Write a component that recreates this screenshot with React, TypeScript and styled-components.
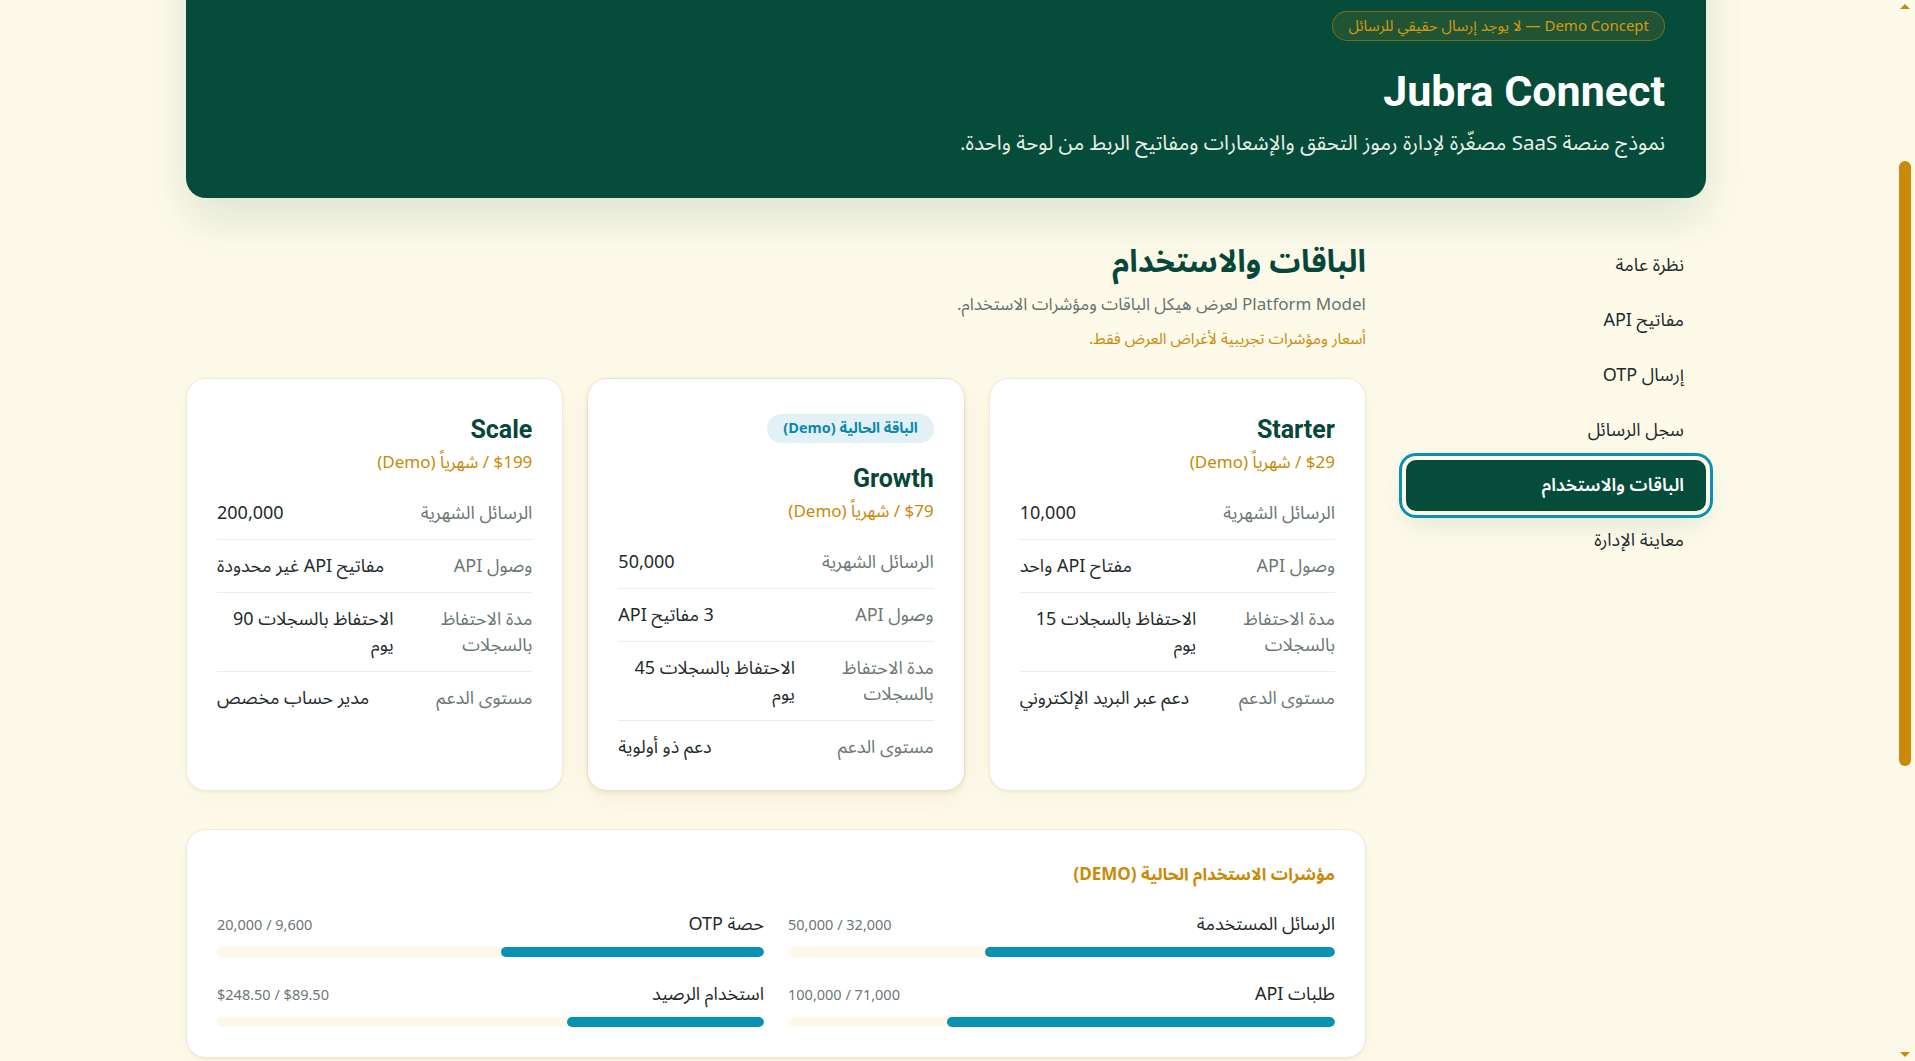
import React, { useLayoutEffect, useState } from "react";
import styled, { createGlobalStyle } from "styled-components";

const GlobalStyle = createGlobalStyle`
  * { box-sizing: border-box; }
  html {
    background: #fdfaea;
    scrollbar-color: #c98a07 #fdfaea;
  }
  body {
    margin: 0;
    background: #fdfaea;
    color: #1e2b29;
    font-family: "Noto Sans Arabic", "Noto Sans", "DejaVu Sans", sans-serif;
  }
`;

const NAV_ITEMS = [
  "نظرة عامة",
  "مفاتيح API",
  "إرسال OTP",
  "سجل الرسائل",
  "الباقات والاستخدام",
  "معاينة الإدارة",
];
const ACTIVE_NAV = "الباقات والاستخدام";

const PLANS = [
  {
    name: "Starter",
    price: "$29 / شهرياً (Demo)",
    current: false,
    specs: [
      ["الرسائل الشهرية", "10,000"],
      ["وصول API", "مفتاح API واحد"],
      ["مدة الاحتفاظ بالسجلات", "الاحتفاظ بالسجلات 15 يوم"],
      ["مستوى الدعم", "دعم عبر البريد الإلكتروني"],
    ],
  },
  {
    name: "Growth",
    price: "$79 / شهرياً (Demo)",
    current: true,
    specs: [
      ["الرسائل الشهرية", "50,000"],
      ["وصول API", "3 مفاتيح API"],
      ["مدة الاحتفاظ بالسجلات", "الاحتفاظ بالسجلات 45 يوم"],
      ["مستوى الدعم", "دعم ذو أولوية"],
    ],
  },
  {
    name: "Scale",
    price: "$199 / شهرياً (Demo)",
    current: false,
    specs: [
      ["الرسائل الشهرية", "200,000"],
      ["وصول API", "مفاتيح API غير محدودة"],
      ["مدة الاحتفاظ بالسجلات", "الاحتفاظ بالسجلات 90 يوم"],
      ["مستوى الدعم", "مدير حساب مخصص"],
    ],
  },
];

const METERS = [
  { label: "الرسائل المستخدمة", used: 32000, total: 50000, money: false },
  { label: "حصة OTP", used: 9600, total: 20000, money: false },
  { label: "طلبات API", used: 71000, total: 100000, money: false },
  { label: "استخدام الرصيد", used: 89.5, total: 248.5, money: true },
];

const fmt = (n: number, money: boolean) =>
  money ? `$${n.toFixed(2)}` : n.toLocaleString("en-US");

const ARROW_SIZE = 15;

// headless browser hides native scrollbars, so draw the themed one
const ScrollIndicator = () => {
  const [thumb, setThumb] = useState({ top: 0, height: 0 });

  useLayoutEffect(() => {
    const update = () => {
      const docH = document.documentElement.scrollHeight;
      const viewH = window.innerHeight;
      const track = viewH - ARROW_SIZE * 2;
      setThumb({
        top: ARROW_SIZE + (track * window.scrollY) / docH,
        height: (track * viewH) / docH,
      });
    };
    update();
    window.addEventListener("scroll", update);
    return () => window.removeEventListener("scroll", update);
  }, []);

  return (
    <Rail>
      <ArrowUp />
      <Thumb style={{ top: thumb.top, height: thumb.height }} />
      <ArrowDown />
    </Rail>
  );
};

export default function App() {
  // the page is shown scrolled past the top of the hero
  useLayoutEffect(() => {
    window.scrollTo(0, 256);
  }, []);

  return (
    <>
      <GlobalStyle />
      <Page dir="rtl">
        <Container>
          <Hero>
            <DemoPill>Demo Concept — لا يوجد إرسال حقيقي للرسائل</DemoPill>
            <HeroTitle>Jubra Connect</HeroTitle>
            <HeroText>
              نموذج منصة SaaS مصغّرة لإدارة رموز التحقق والإشعارات ومفاتيح الربط
              من لوحة واحدة.
            </HeroText>
          </Hero>

          <Layout>
            <Sidebar>
              {NAV_ITEMS.map((item) => (
                <NavItem key={item} $active={item === ACTIVE_NAV}>
                  {item}
                </NavItem>
              ))}
            </Sidebar>

            <Main>
              <SectionTitle>الباقات والاستخدام</SectionTitle>
              <SectionLead>
                Platform Model لعرض هيكل الباقات ومؤشرات الاستخدام.
              </SectionLead>
              <SectionNote>أسعار ومؤشرات تجريبية لأغراض العرض فقط.</SectionNote>

              <PlanGrid>
                {PLANS.map((plan) => (
                  <PlanCard key={plan.name} $current={plan.current}>
                    {plan.current && (
                      <CurrentBadge>الباقة الحالية (Demo)</CurrentBadge>
                    )}
                    <PlanName>{plan.name}</PlanName>
                    <PlanPrice>{plan.price}</PlanPrice>
                    <SpecList>
                      {plan.specs.map(([label, value]) => (
                        <SpecRow key={label}>
                          <SpecLabel>{label}</SpecLabel>
                          <SpecValue>{value}</SpecValue>
                        </SpecRow>
                      ))}
                    </SpecList>
                  </PlanCard>
                ))}
              </PlanGrid>

              <UsageCard>
                <UsageTitle>مؤشرات الاستخدام الحالية (DEMO)</UsageTitle>
                <MeterGrid>
                  {METERS.map((m) => (
                    <Meter key={m.label}>
                      <MeterHead>
                        <MeterLabel>{m.label}</MeterLabel>
                        <MeterValue>
                          {fmt(m.used, m.money)} / {fmt(m.total, m.money)}
                        </MeterValue>
                      </MeterHead>
                      <Track>
                        <Fill style={{ width: `${(m.used / m.total) * 100}%` }} />
                      </Track>
                    </Meter>
                  ))}
                </MeterGrid>
              </UsageCard>
            </Main>
          </Layout>
        </Container>
      </Page>
      <ScrollIndicator />
    </>
  );
}

const Page = styled.div`
  min-height: 1808px;
  padding: 24px 23px 40px 0;
`;

const Container = styled.div`
  max-width: 1520px;
  margin: 0 auto;
`;

const Hero = styled.header`
  min-height: 430px;
  display: flex;
  flex-direction: column;
  justify-content: flex-end;
  align-items: flex-start;
  padding: 40px 41px 39px;
  background: #054c3b;
  border-radius: 20px;
  box-shadow: 0 22px 48px rgba(5, 76, 59, 0.12);
  color: #fff;
`;

const DemoPill = styled.span`
  display: inline-block;
  padding: 4px 15px;
  border-radius: 999px;
  border: 1px solid rgba(201, 138, 7, 0.5);
  background: rgba(201, 138, 7, 0.14);
  color: #d49a14;
  font-size: 15px;
  line-height: 20px;
`;

const HeroTitle = styled.h1`
  margin: 21px 0 0;
  font-family: Roboto, "Noto Sans", sans-serif;
  font-size: 43px;
  line-height: 58px;
  font-weight: 700;
  color: #fff;
`;

const HeroText = styled.p`
  margin: 9px 0 0;
  font-size: 20.5px;
  line-height: 30px;
  color: #e9efe6;
`;

const Layout = styled.div`
  display: grid;
  grid-template-columns: 300px 1fr;
  gap: 40px;
  align-items: start;
  margin-top: 42px;
`;

const Sidebar = styled.nav`
  display: flex;
  flex-direction: column;
  gap: 4px;
`;

const NavItem = styled.a<{ $active?: boolean }>`
  display: block;
  padding: 12px 22px;
  border-radius: 10px;
  font-size: 18px;
  line-height: 27px;
  font-weight: ${({ $active }) => ($active ? 600 : 400)};
  color: ${({ $active }) => ($active ? "#ffffff" : "#1e2b29")};
  background: ${({ $active }) => ($active ? "#054c3b" : "transparent")};
  box-shadow: ${({ $active }) =>
    $active
      ? "0 0 0 4px #fdfaea, 0 0 0 7px #0b8fb3, 0 12px 28px rgba(5, 76, 59, 0.12)"
      : "none"};
  cursor: pointer;
`;

const Main = styled.main`
  min-width: 0;
`;

const SectionTitle = styled.h2`
  margin: -3px 0 0;
  font-size: 31px;
  line-height: 50px;
  font-weight: 700;
  color: #06473a;
`;

const SectionLead = styled.p`
  margin: 5px 0 0;
  font-size: 17px;
  line-height: 27px;
  color: #667370;
`;

const SectionNote = styled.p`
  margin: 7px 0 0;
  font-size: 15.5px;
  line-height: 27px;
  color: #c98a07;
`;

const PlanGrid = styled.div`
  display: grid;
  grid-template-columns: repeat(3, 1fr);
  gap: 24px;
  margin-top: 25px;
`;

const PlanCard = styled.article<{ $current?: boolean }>`
  display: flex;
  flex-direction: column;
  align-items: stretch;
  padding: 35px 30px 30px;
  background: #ffffff;
  border: 1px solid ${({ $current }) => ($current ? "#e9e1c8" : "#f0eadb")};
  border-radius: 20px;
  box-shadow: ${({ $current }) =>
    $current
      ? "0 2px 4px rgba(150, 130, 70, 0.14), 0 10px 26px rgba(150, 130, 70, 0.08)"
      : "0 1px 3px rgba(150, 130, 70, 0.1), 0 8px 24px rgba(150, 130, 70, 0.05)"};
`;

const CurrentBadge = styled.span`
  align-self: flex-start;
  padding: 4px 16px;
  margin-bottom: 20px;
  border-radius: 999px;
  background: #e1f1f5;
  color: #0a87a9;
  font-size: 14.5px;
  line-height: 21px;
  font-weight: 700;
`;

const PlanName = styled.h3`
  margin: 0;
  font-family: Roboto, "Noto Sans", sans-serif;
  font-size: 25px;
  line-height: 31px;
  font-weight: 700;
  color: #06473a;
`;

const PlanPrice = styled.div`
  margin: 5px 0 10px;
  font-size: 17px;
  line-height: 27px;
  color: #c98a07;
`;

const SpecList = styled.div`
  display: flex;
  flex-direction: column;
`;

const SpecRow = styled.div`
  display: flex;
  justify-content: space-between;
  gap: 12px;
  padding: 13px 0;
  border-bottom: 1px solid #f1ecdd;
  font-size: 18px;
  line-height: 26px;

  &:last-child {
    border-bottom: none;
    padding-bottom: 0;
  }
`;

const SpecLabel = styled.span`
  max-width: 40%;
  color: #6b7774;
`;

const SpecValue = styled.span`
  max-width: 56%;
  color: #1e2b29;
`;

const UsageCard = styled.section`
  margin-top: 38px;
  padding: 33px 30px 30px;
  background: #ffffff;
  border: 1px solid #f0eadb;
  border-radius: 20px;
  box-shadow: 0 1px 3px rgba(150, 130, 70, 0.1), 0 8px 24px rgba(150, 130, 70, 0.05);
`;

const UsageTitle = styled.h4`
  margin: 0 0 22px;
  font-size: 17px;
  line-height: 25px;
  font-weight: 700;
  color: #c98a07;
`;

const MeterGrid = styled.div`
  display: grid;
  grid-template-columns: 1fr 1fr;
  gap: 23px 24px;
`;

const Meter = styled.div`
  display: flex;
  flex-direction: column;
`;

const MeterHead = styled.div`
  display: flex;
  justify-content: space-between;
  align-items: baseline;
`;

const MeterLabel = styled.span`
  font-size: 18px;
  line-height: 27px;
  color: #1e2b29;
`;

const MeterValue = styled.span`
  font-size: 14.5px;
  color: #6b7774;
`;

const Track = styled.div`
  height: 10px;
  margin-top: 6px;
  border-radius: 999px;
  background: #fdf8e7;
  overflow: hidden;
`;

const Fill = styled.div`
  height: 100%;
  border-radius: 999px;
  background: #0891b2;
`;

const Rail = styled.div`
  position: fixed;
  top: 0;
  right: 0;
  bottom: 0;
  width: 20px;
  background: #fdfaea;
`;

const Thumb = styled.div`
  position: absolute;
  right: 4px;
  width: 12px;
  border-radius: 6px;
  background: #c98a07;
`;

const ArrowUp = styled.div`
  position: absolute;
  top: 4px;
  right: 5px;
  border-left: 5px solid transparent;
  border-right: 5px solid transparent;
  border-bottom: 5px solid #c98a07;
`;

const ArrowDown = styled(ArrowUp)`
  top: auto;
  bottom: 4px;
  border-bottom: none;
  border-top: 5px solid #c98a07;
`;
